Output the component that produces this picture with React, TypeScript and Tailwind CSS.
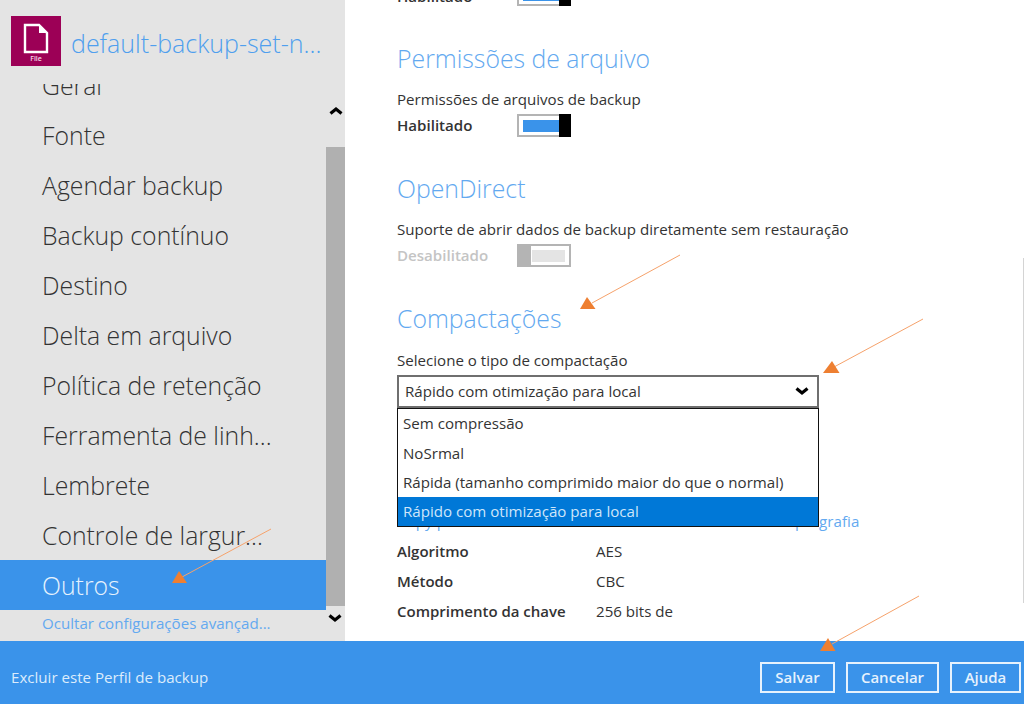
const menu = ["Geral","Fonte","Agendar backup","Backup contínuo","Destino","Delta em arquivo","Política de retenção","Ferramenta de linh...","Lembrete","Controle de largur..."];

function Chevron({ up, className }: { up?: boolean; className?: string }) {
  return (
    <svg width="14" height="9" viewBox="0 0 14 9" className={className}>
      <path d={up ? "M1.5 7.5 L7 3 L12.5 7.5" : "M1.5 1.5 L7 6 L12.5 1.5"} fill="none" stroke="#000" strokeWidth="3.2" />
    </svg>
  );
}

function Toggle({ on }: { on: boolean }) {
  return on ? (
    <div className="flex h-[23px] w-[54px] items-stretch border-2 border-[#b4b4b4] bg-white">
      <div className="flex flex-1 items-center pl-[4px]"><div className="h-[12px] w-full bg-[#3a93ea]" /></div>
      <div className="w-[12px] -my-[2px] -mr-[2px] bg-black" />
    </div>
  ) : (
    <div className="flex h-[23px] w-[54px] items-stretch border-2 border-[#b4b4b4] bg-white">
      <div className="w-[12px] bg-[#b4b4b4]" />
      <div className="flex flex-1 items-center pl-[1px] pr-[4px]"><div className="h-[12px] w-full bg-[#e4e4e4]" /></div>
    </div>
  );
}

function Heading({ children }: { children: React.ReactNode }) {
  return <h2 className="h-[34px] text-[24.8px] font-light leading-[34px] text-[#63a9f0]">{children}</h2>;
}

function Row({ label, value }: { label: string; value: string }) {
  return (
    <div className="flex h-[30px] items-center text-[15.1px] text-[#333]">
      <span className="w-[199px] text-[15px] font-semibold">{label}</span>
      <span>{value}</span>
    </div>
  );
}

export default function App() {
  return (
    <div className="relative flex h-[704px] w-[1024px] flex-col overflow-hidden bg-white font-['Open_Sans',sans-serif]">
      <div className="flex h-[641px] min-h-0">
        <aside className="flex w-[345px] shrink-0 flex-col bg-[#e4e4e4]">
          <div className="flex h-[84px] shrink-0 items-start pl-[11px] pt-[16px]">
            <div className="flex h-[50px] w-[50px] flex-col items-center bg-[#9c0056] pt-[7px]">
              <svg width="26" height="31" viewBox="0 0 26 31">
                <path d="M2 2 H16 L24 10 V29 H2 Z" fill="none" stroke="#fff" strokeWidth="2.4" />
                <path d="M16 2 V10 H24 Z" fill="#fff" />
              </svg>
              <span className="text-[7px] font-semibold leading-[9px] text-[#f4dbe8]">File</span>
            </div>
            <div className="ml-[10px] mt-[9px] text-[25px] font-light leading-[36px] text-[#4f9fee]">default-backup-set-n...</div>
          </div>
          <div className="flex h-[526px] shrink-0 overflow-hidden">
            <div className="w-[326px] overflow-hidden">
              <div className="-mt-[24px]">
                {menu.map((m) => (
                  <div key={m} className="flex h-[50px] items-center pl-[42px] pt-[2px] text-[24.8px] font-light text-[#333]">{m}</div>
                ))}
                <div className="flex h-[50px] items-center bg-[#3a93ea] pl-[42px] pt-[2px] text-[24.8px] font-light text-[#e6f2fd]">Outros</div>
              </div>
            </div>
            <div className="flex w-[19px] flex-col items-center">
              <div className="flex h-[63px] items-start justify-center pt-[22px]"><Chevron up /></div>
              <div className="h-[459px] w-full bg-[#b0b0b0]" />
            </div>
          </div>
          <div className="relative flex flex-1 items-center pb-[4px] pl-[42px] text-[15.1px] text-[#63a9f0]">
            Ocultar configurações avançad...
            <Chevron className="absolute right-[3px] top-[4px]" />
          </div>
        </aside>

        <main className="relative min-w-0 flex-1 overflow-hidden pl-[52px]">
          <div className="-mt-[14px] flex h-[20px] items-start">
            <span className="w-[120px] text-[15.1px] font-semibold leading-[20px] text-[#333]">Habilitado</span>
            <div className="-mt-[3px]"><Toggle on /></div>
          </div>
          <div className="mt-[35px]"><Heading>Permissões de arquivo</Heading></div>
          <p className="mt-[14px] text-[15.1px] leading-[20px] text-[#333]">Permissões de arquivos de backup</p>
          <div className="mt-[5px] flex h-[23px] items-center">
            <span className="w-[120px] text-[15.1px] font-semibold text-[#333]">Habilitado</span>
            <Toggle on />
          </div>
          <div className="mt-[34px]"><Heading>OpenDirect</Heading></div>
          <p className="mt-[14px] text-[15.1px] leading-[20px] text-[#333]">Suporte de abrir dados de backup diretamente sem restauração</p>
          <div className="mt-[5px] flex h-[23px] items-center">
            <span className="w-[120px] text-[15.1px] font-semibold text-[#c4c4c4]">Desabilitado</span>
            <Toggle on={false} />
          </div>
          <div className="mt-[34px]"><Heading>Compactações</Heading></div>
          <p className="mt-[15px] text-[15.1px] leading-[20px] text-[#333]">Selecione o tipo de compactação</p>
          <div className="relative mt-[5px] w-[422px]">
            <div className="flex h-[33px] items-center justify-between border-2 border-[#6f6f6f] pl-[6px] pr-[8px] text-[15.1px] text-[#333]">
              <span>Rápido com otimização para local</span>
              <Chevron />
            </div>
            <div className="absolute left-0 top-[33px] z-10 w-[422px] border border-[#111] bg-white text-[15.1px] text-[#333]">
              <div className="flex h-[29.3px] items-center pl-[5px]">Sem compressão</div>
              <div className="flex h-[29.3px] items-center pl-[5px]">NoSrmal</div>
              <div className="flex h-[29.3px] items-center pl-[5px]">Rápida (tamanho comprimido maior do que o normal)</div>
              <div className="flex h-[29.3px] items-center bg-[#0078d7] pl-[5px] text-[#cfe6fa]">Rápido com otimização para local</div>
            </div>
          </div>
          <p className="mt-[103px] text-[15.1px] leading-[20px] tracking-[0.08px] whitespace-nowrap text-[#63a9f0]">Copy para área de transferência a senha da chave de criptografia</p>
          <div className="mt-[5px]">
            <Row label="Algoritmo" value="AES" />
            <Row label="Método" value="CBC" />
            <Row label="Comprimento da chave" value="256 bits de" />
          </div>
          <div className="absolute right-0 top-[258px] h-[345px] w-px bg-[#d4d4d4]" />
        </main>
      </div>

      <footer className="flex h-[63px] shrink-0 items-center justify-between bg-[#3a93ea] pl-[11px] pr-[3px]">
        <span className="mt-[9px] text-[15.1px] text-[#dcecfc]">Excluir este Perfil de backup</span>
        <div className="mt-[9px] flex gap-[11px]">
          {[["Salvar","w-[75px]"],["Cancelar","w-[93px]"],["Ajuda","w-[71px]"]].map(([t,w]) => (
            <div key={t} className={`flex h-[31px] items-center justify-center border-2 border-[#e6f2fd] text-[15px] font-semibold text-[#e6f2fd] ${w}`}>{t}</div>
          ))}
        </div>
      </footer>

      <svg className="pointer-events-none absolute inset-0" width="1024" height="704" viewBox="0 0 1024 704">
        <g stroke="#f6a26b" strokeWidth="1" fill="#ee7f31">
          <line x1="680" y1="255" x2="592" y2="303" />
          <line x1="923" y1="319" x2="834" y2="367" />
          <line x1="271" y1="529" x2="182" y2="577" />
          <line x1="919" y1="596" x2="832" y2="644" />
        </g>
        <g fill="#ee7f31">
          <polygon points="587,297 595.5,309 580,309" />
          <polygon points="832,361 839.5,373 823,373" />
          <polygon points="179,571 187,583 172,583" />
          <polygon points="828,638 835.5,651 820,651" />
        </g>
      </svg>
    </div>
  );
}
